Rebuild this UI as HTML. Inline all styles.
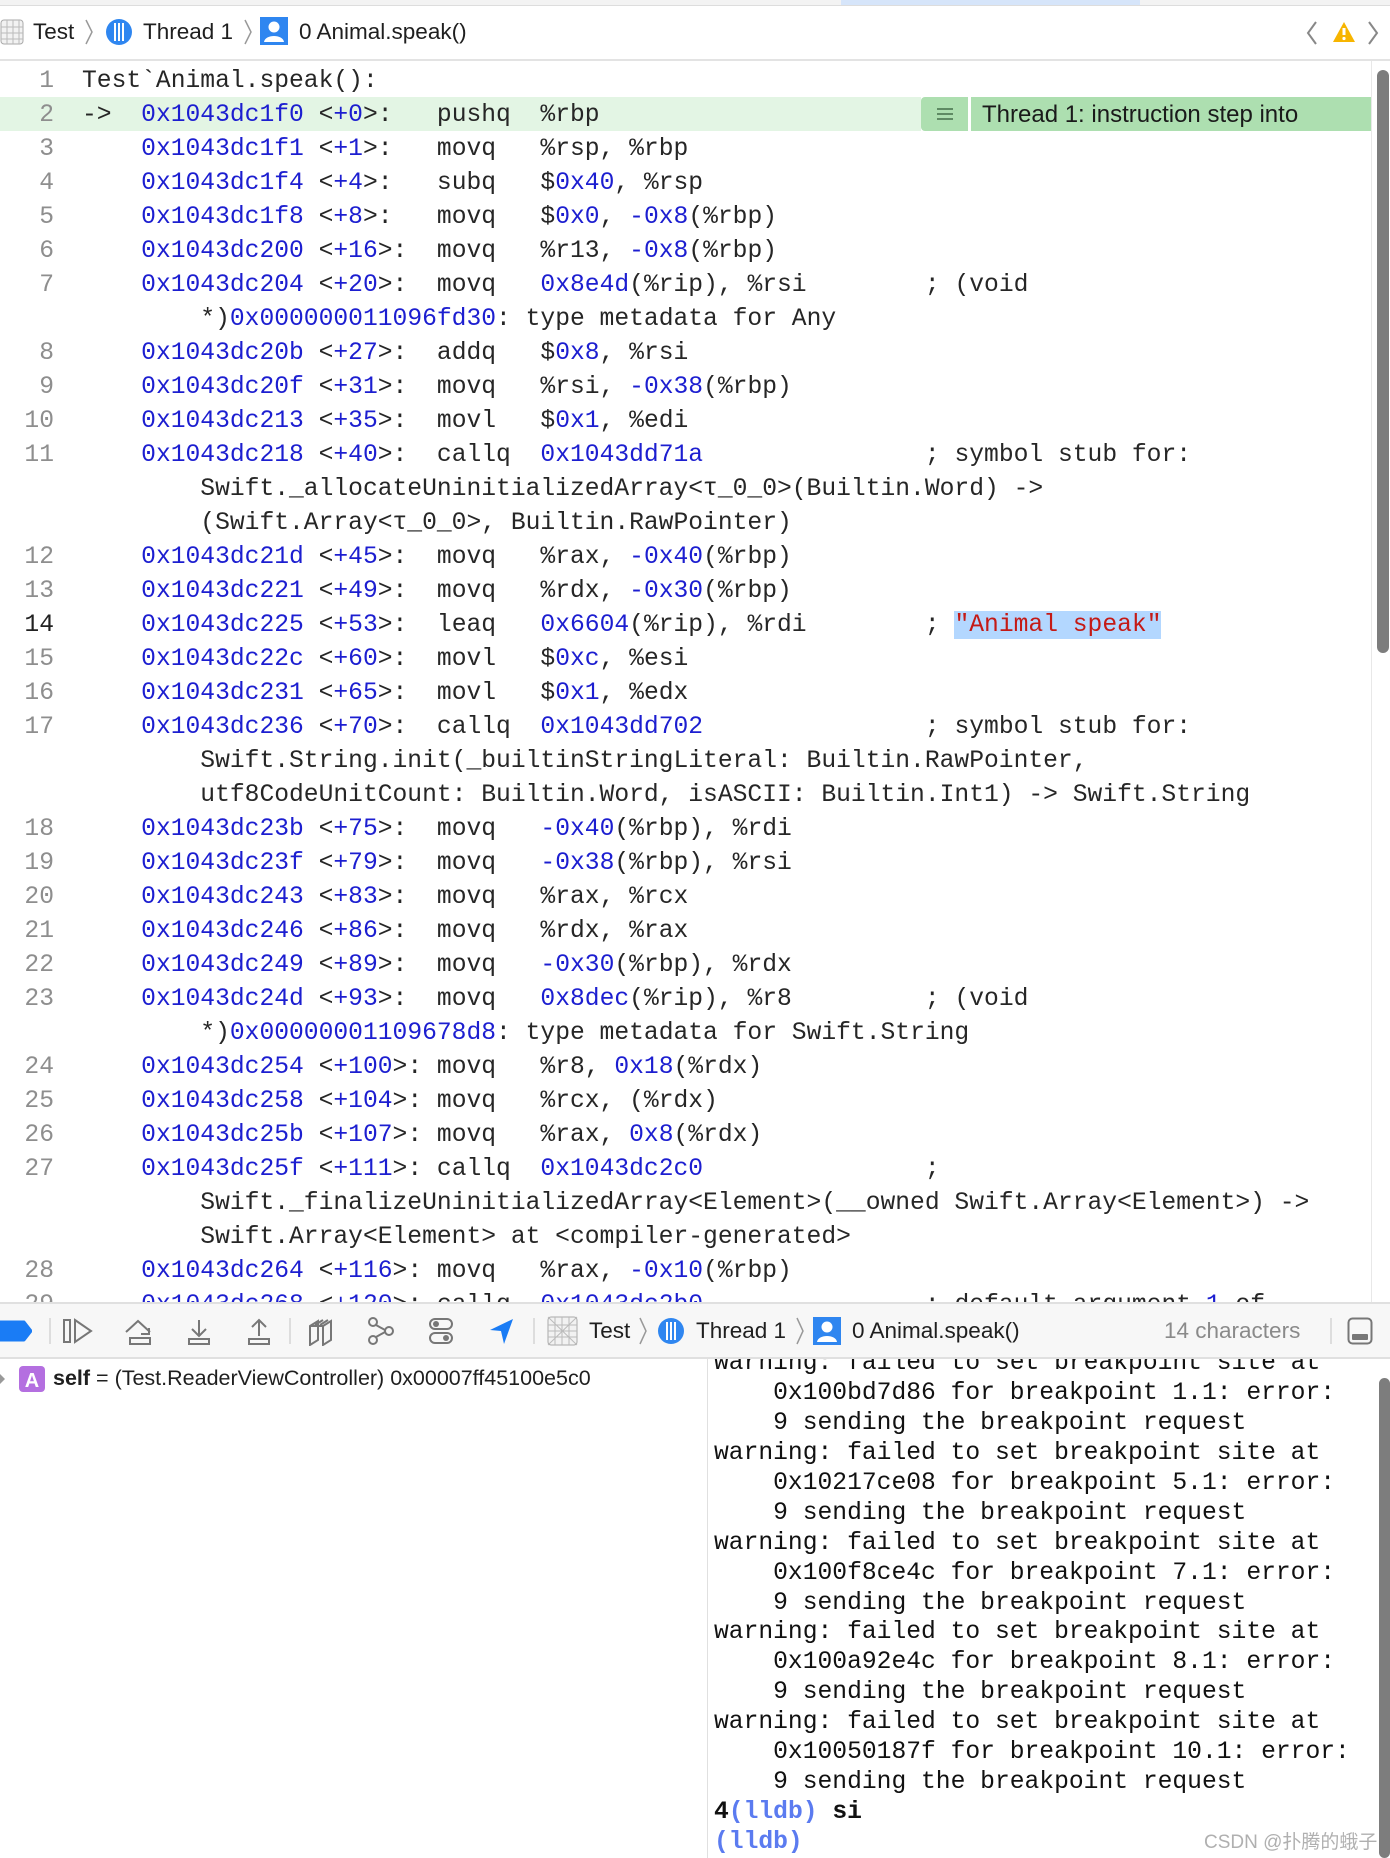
<!DOCTYPE html>
<html><head><meta charset="utf-8"><style>
*{margin:0;padding:0;box-sizing:border-box}
body{width:1390px;height:1858px;position:relative;background:#fff;overflow:hidden;font-family:"Liberation Sans",sans-serif;color:#1f1f1f}
.ui{font-size:22.5px;position:absolute;white-space:nowrap}
.r{position:absolute;left:0;width:1372px;height:34px;line-height:36px;font-family:"Liberation Mono",monospace;font-size:24.65px;white-space:pre;color:#262626}
.ln{position:absolute;left:0;width:54px;text-align:right;color:#8e8e8e}
.c{position:absolute;left:82px}
.n{color:#1c1ed0}
.s{color:#c41a16;background:#b3d7ff}
.con{position:absolute;left:714px;font-family:"Liberation Mono",monospace;font-size:24.65px;white-space:pre;color:#111;height:29.94px;line-height:29.94px}
.lb{color:#5b7bf0;font-weight:bold}
</style></head><body>
<div style="position:absolute;left:0;top:0;width:1390px;height:6px;background:#f3f3f3;border-bottom:1px solid #ddd"></div>
<div style="position:absolute;left:841px;top:0;width:299px;height:5px;background:#d6e5fa"></div>
<svg style="position:absolute;left:0;top:19px" width="24" height="26" viewBox="0 0 24 26"><rect x="1" y="1" width="22" height="24" rx="3" fill="#f2f2f2" stroke="#aaa"/><path d="M1 8H23M1 14H23M1 20H23M7 1V25M13 1V25M19 1V25" stroke="#bbb" stroke-width="1"/></svg>
<div class="ui" style="left:33px;top:19px">Test</div>
<svg style="position:absolute;left:84px;top:18px" width="10" height="28"><path d="M2 2L8 14L2 26" stroke="#999" fill="none" stroke-width="1.5"/></svg>
<svg style="position:absolute;left:104px;top:17px" width="30" height="30"><circle cx="15" cy="15" r="13" fill="#2f86f0"/><path d="M11 6V24M15 6V24M19 6V24" stroke="#fff" stroke-width="2"/></svg>
<div class="ui" style="left:143px;top:19px">Thread 1</div>
<svg style="position:absolute;left:243px;top:18px" width="10" height="28"><path d="M2 2L8 14L2 26" stroke="#999" fill="none" stroke-width="1.5"/></svg>
<svg style="position:absolute;left:260px;top:17px" width="28" height="28"><rect width="28" height="28" fill="#2f86f0"/><circle cx="14" cy="10" r="5.5" fill="#fff"/><path d="M4 25C5 17 23 17 24 25Z" fill="#fff"/></svg>
<div class="ui" style="left:299px;top:19px">0 Animal.speak()</div>
<svg style="position:absolute;left:1305px;top:20px" width="14" height="26"><path d="M11 2L3 13L11 24" stroke="#888" fill="none" stroke-width="2"/></svg>
<svg style="position:absolute;left:1332px;top:20px" width="24" height="24"><path d="M12 2L23 22H1Z" fill="#f7b500"/><path d="M12 8V15" stroke="#fff" stroke-width="3"/><circle cx="12" cy="18.5" r="1.6" fill="#fff"/></svg>
<svg style="position:absolute;left:1366px;top:20px" width="14" height="26"><path d="M3 2L11 13L3 24" stroke="#888" fill="none" stroke-width="2"/></svg>
<div style="position:absolute;left:0;top:59px;width:1390px;height:2px;background:#e3e3e3"></div>

<div style="position:absolute;left:1371px;top:61px;width:1px;height:1242px;background:#e8e8e8"></div>
<div style="position:absolute;left:1377px;top:70px;width:12px;height:583px;border-radius:6px;background:#7d7d7d"></div>
<div style="position:absolute;left:0;top:97px;width:921px;height:34px;background:#e3f5e4"></div>
<div style="position:absolute;left:921px;top:97px;width:47px;height:34px;background:#addfb0;border-radius:4px 0 0 4px"></div>
<svg style="position:absolute;left:936px;top:105px" width="18" height="18"><path d="M1 4H17M1 9H17M1 14H17" stroke="#5e8a63" stroke-width="2"/></svg>
<div style="position:absolute;left:971px;top:97px;width:400px;height:34px;background:#addfb0"></div>
<div class="ui" style="left:982px;top:98px;line-height:34px;font-size:24px;color:#1a1a1a">Thread 1: instruction step into</div>

<div class="r" style="top:63px"><span class="ln">1</span><span class="c">Test`Animal.speak():</span></div>
<div class="r" style="top:97px"><span class="ln">2</span><span class="c">-&gt;  <span class="n">0x1043dc1f0</span> &lt;<span class="n">+0</span>&gt;:   pushq  %rbp</span></div>
<div class="r" style="top:131px"><span class="ln">3</span><span class="c">    <span class="n">0x1043dc1f1</span> &lt;<span class="n">+1</span>&gt;:   movq   %rsp, %rbp</span></div>
<div class="r" style="top:165px"><span class="ln">4</span><span class="c">    <span class="n">0x1043dc1f4</span> &lt;<span class="n">+4</span>&gt;:   subq   $<span class="n">0x40</span>, %rsp</span></div>
<div class="r" style="top:199px"><span class="ln">5</span><span class="c">    <span class="n">0x1043dc1f8</span> &lt;<span class="n">+8</span>&gt;:   movq   $<span class="n">0x0</span>, <span class="n">-0x8</span>(%rbp)</span></div>
<div class="r" style="top:233px"><span class="ln">6</span><span class="c">    <span class="n">0x1043dc200</span> &lt;<span class="n">+16</span>&gt;:  movq   %r13, <span class="n">-0x8</span>(%rbp)</span></div>
<div class="r" style="top:267px"><span class="ln">7</span><span class="c">    <span class="n">0x1043dc204</span> &lt;<span class="n">+20</span>&gt;:  movq   <span class="n">0x8e4d</span>(%rip), %rsi        ; (void</span></div>
<div class="r" style="top:301px"><span class="c">        *)<span class="n">0x000000011096fd30</span>: type metadata for Any</span></div>
<div class="r" style="top:335px"><span class="ln">8</span><span class="c">    <span class="n">0x1043dc20b</span> &lt;<span class="n">+27</span>&gt;:  addq   $<span class="n">0x8</span>, %rsi</span></div>
<div class="r" style="top:369px"><span class="ln">9</span><span class="c">    <span class="n">0x1043dc20f</span> &lt;<span class="n">+31</span>&gt;:  movq   %rsi, <span class="n">-0x38</span>(%rbp)</span></div>
<div class="r" style="top:403px"><span class="ln">10</span><span class="c">    <span class="n">0x1043dc213</span> &lt;<span class="n">+35</span>&gt;:  movl   $<span class="n">0x1</span>, %edi</span></div>
<div class="r" style="top:437px"><span class="ln">11</span><span class="c">    <span class="n">0x1043dc218</span> &lt;<span class="n">+40</span>&gt;:  callq  <span class="n">0x1043dd71a</span>               ; symbol stub for:</span></div>
<div class="r" style="top:471px"><span class="c">        Swift._allocateUninitializedArray&lt;τ_0_0&gt;(Builtin.Word) -&gt;</span></div>
<div class="r" style="top:505px"><span class="c">        (Swift.Array&lt;τ_0_0&gt;, Builtin.RawPointer)</span></div>
<div class="r" style="top:539px"><span class="ln">12</span><span class="c">    <span class="n">0x1043dc21d</span> &lt;<span class="n">+45</span>&gt;:  movq   %rax, <span class="n">-0x40</span>(%rbp)</span></div>
<div class="r" style="top:573px"><span class="ln">13</span><span class="c">    <span class="n">0x1043dc221</span> &lt;<span class="n">+49</span>&gt;:  movq   %rdx, <span class="n">-0x30</span>(%rbp)</span></div>
<div class="r" style="top:607px"><span class="ln" style="color:#222">14</span><span class="c">    <span class="n">0x1043dc225</span> &lt;<span class="n">+53</span>&gt;:  leaq   <span class="n">0x6604</span>(%rip), %rdi        ; <span class="s">"Animal speak"</span></span></div>
<div class="r" style="top:641px"><span class="ln">15</span><span class="c">    <span class="n">0x1043dc22c</span> &lt;<span class="n">+60</span>&gt;:  movl   $<span class="n">0xc</span>, %esi</span></div>
<div class="r" style="top:675px"><span class="ln">16</span><span class="c">    <span class="n">0x1043dc231</span> &lt;<span class="n">+65</span>&gt;:  movl   $<span class="n">0x1</span>, %edx</span></div>
<div class="r" style="top:709px"><span class="ln">17</span><span class="c">    <span class="n">0x1043dc236</span> &lt;<span class="n">+70</span>&gt;:  callq  <span class="n">0x1043dd702</span>               ; symbol stub for:</span></div>
<div class="r" style="top:743px"><span class="c">        Swift.String.init(_builtinStringLiteral: Builtin.RawPointer,</span></div>
<div class="r" style="top:777px"><span class="c">        utf8CodeUnitCount: Builtin.Word, isASCII: Builtin.Int1) -&gt; Swift.String</span></div>
<div class="r" style="top:811px"><span class="ln">18</span><span class="c">    <span class="n">0x1043dc23b</span> &lt;<span class="n">+75</span>&gt;:  movq   <span class="n">-0x40</span>(%rbp), %rdi</span></div>
<div class="r" style="top:845px"><span class="ln">19</span><span class="c">    <span class="n">0x1043dc23f</span> &lt;<span class="n">+79</span>&gt;:  movq   <span class="n">-0x38</span>(%rbp), %rsi</span></div>
<div class="r" style="top:879px"><span class="ln">20</span><span class="c">    <span class="n">0x1043dc243</span> &lt;<span class="n">+83</span>&gt;:  movq   %rax, %rcx</span></div>
<div class="r" style="top:913px"><span class="ln">21</span><span class="c">    <span class="n">0x1043dc246</span> &lt;<span class="n">+86</span>&gt;:  movq   %rdx, %rax</span></div>
<div class="r" style="top:947px"><span class="ln">22</span><span class="c">    <span class="n">0x1043dc249</span> &lt;<span class="n">+89</span>&gt;:  movq   <span class="n">-0x30</span>(%rbp), %rdx</span></div>
<div class="r" style="top:981px"><span class="ln">23</span><span class="c">    <span class="n">0x1043dc24d</span> &lt;<span class="n">+93</span>&gt;:  movq   <span class="n">0x8dec</span>(%rip), %r8         ; (void</span></div>
<div class="r" style="top:1015px"><span class="c">        *)<span class="n">0x00000001109678d8</span>: type metadata for Swift.String</span></div>
<div class="r" style="top:1049px"><span class="ln">24</span><span class="c">    <span class="n">0x1043dc254</span> &lt;<span class="n">+100</span>&gt;: movq   %r8, <span class="n">0x18</span>(%rdx)</span></div>
<div class="r" style="top:1083px"><span class="ln">25</span><span class="c">    <span class="n">0x1043dc258</span> &lt;<span class="n">+104</span>&gt;: movq   %rcx, (%rdx)</span></div>
<div class="r" style="top:1117px"><span class="ln">26</span><span class="c">    <span class="n">0x1043dc25b</span> &lt;<span class="n">+107</span>&gt;: movq   %rax, <span class="n">0x8</span>(%rdx)</span></div>
<div class="r" style="top:1151px"><span class="ln">27</span><span class="c">    <span class="n">0x1043dc25f</span> &lt;<span class="n">+111</span>&gt;: callq  <span class="n">0x1043dc2c0</span>               ;</span></div>
<div class="r" style="top:1185px"><span class="c">        Swift._finalizeUninitializedArray&lt;Element&gt;(__owned Swift.Array&lt;Element&gt;) -&gt;</span></div>
<div class="r" style="top:1219px"><span class="c">        Swift.Array&lt;Element&gt; at &lt;compiler-generated&gt;</span></div>
<div class="r" style="top:1253px"><span class="ln">28</span><span class="c">    <span class="n">0x1043dc264</span> &lt;<span class="n">+116</span>&gt;: movq   %rax, <span class="n">-0x10</span>(%rbp)</span></div>
<div class="r" style="top:1287px"><span class="ln">29</span><span class="c">    <span class="n">0x1043dc268</span> &lt;<span class="n">+120</span>&gt;: callq  <span class="n">0x1043dc2b0</span>               ; default argument <span class="n">1</span> of</span></div>

<div style="position:absolute;left:0;top:1302px;width:1390px;height:57px;background:#f7f7f7;border-top:2px solid #e0e0e0;border-bottom:2px solid #e0e0e0"></div>
<svg style="position:absolute;left:0;top:1320px" width="32" height="22"><path d="M0 2H24L31 11L24 20H0Z" fill="#1a7cf5" stroke="#1a7cf5" stroke-linejoin="round" stroke-width="3"/></svg>
<div style="position:absolute;left:49px;top:1318px;width:2px;height:26px;background:#ddd"></div>
<svg style="position:absolute;left:62px;top:1318px" width="32" height="26" viewBox="0 0 32 26"><rect x="2" y="2" width="6" height="22" fill="none" stroke="#777" stroke-width="2"/><path d="M13 2L29 13L13 24Z" fill="none" stroke="#777" stroke-width="2"/></svg>
<svg style="position:absolute;left:124px;top:1318px" width="32" height="28" viewBox="0 0 32 28"><path d="M2 14L14 3L26 14" fill="none" stroke="#777" stroke-width="2"/><path d="M17 16H25V10" fill="none" stroke="#777" stroke-width="2"/><rect x="6" y="20" width="20" height="6" fill="none" stroke="#777" stroke-width="2"/></svg>
<svg style="position:absolute;left:186px;top:1318px" width="26" height="28" viewBox="0 0 26 28"><path d="M13 2V17M6 11L13 18L20 11" fill="none" stroke="#777" stroke-width="2"/><rect x="3" y="21" width="20" height="5" fill="none" stroke="#777" stroke-width="2"/></svg>
<svg style="position:absolute;left:246px;top:1318px" width="26" height="28" viewBox="0 0 26 28"><path d="M13 18V3M6 9L13 2L20 9" fill="none" stroke="#777" stroke-width="2"/><rect x="3" y="21" width="20" height="5" fill="none" stroke="#777" stroke-width="2"/></svg>
<div style="position:absolute;left:289px;top:1318px;width:2px;height:26px;background:#ddd"></div>
<svg style="position:absolute;left:308px;top:1318px" width="28" height="28" viewBox="0 0 28 28"><path d="M2 8L10 3V22L2 27Z M7 7L15 2 M12 7L20 2 M15 8L23 3V22L15 27Z" fill="none" stroke="#777" stroke-width="2"/><path d="M2 8H15" stroke="#777" stroke-width="2"/></svg>
<svg style="position:absolute;left:367px;top:1317px" width="28" height="28" viewBox="0 0 28 28"><circle cx="6" cy="5" r="4" fill="none" stroke="#777" stroke-width="2"/><circle cx="6" cy="23" r="4" fill="none" stroke="#777" stroke-width="2"/><circle cx="22" cy="14" r="4" fill="none" stroke="#777" stroke-width="2"/><path d="M9 8L18 13M9 20L18 15" stroke="#777" stroke-width="2"/></svg>
<svg style="position:absolute;left:428px;top:1317px" width="26" height="28" viewBox="0 0 26 28"><rect x="2" y="2" width="22" height="10" rx="5" fill="none" stroke="#777" stroke-width="2"/><rect x="2" y="16" width="22" height="10" rx="5" fill="none" stroke="#777" stroke-width="2"/><circle cx="8" cy="7" r="3" fill="#777"/><circle cx="18" cy="21" r="3" fill="#777"/></svg>
<svg style="position:absolute;left:488px;top:1317px" width="26" height="28" viewBox="0 0 26 28"><path d="M25 2L2 13L13 14L16 27Z" fill="#1a7cf5"/></svg>
<div style="position:absolute;left:533px;top:1318px;width:2px;height:26px;background:#ddd"></div>
<svg style="position:absolute;left:547px;top:1316px" width="31" height="30" viewBox="0 0 31 30"><rect x="1" y="1" width="29" height="28" rx="3" fill="#f2f2f2" stroke="#aaa"/><path d="M1 9H30M1 15H30M1 21H30M8 1V29M15 1V29M22 1V29M1 1L30 29M30 1L1 29" stroke="#bbb" stroke-width="1"/></svg>
<div class="ui" style="left:589px;top:1318px">Test</div>
<svg style="position:absolute;left:638px;top:1316px" width="10" height="30"><path d="M2 2L8 15L2 28" stroke="#999" fill="none" stroke-width="1.5"/></svg>
<svg style="position:absolute;left:656px;top:1316px" width="30" height="30"><circle cx="15" cy="15" r="13" fill="#2f86f0"/><path d="M11 6V24M15 6V24M19 6V24" stroke="#fff" stroke-width="2"/></svg>
<div class="ui" style="left:696px;top:1318px">Thread 1</div>
<svg style="position:absolute;left:795px;top:1316px" width="10" height="30"><path d="M2 2L8 15L2 28" stroke="#999" fill="none" stroke-width="1.5"/></svg>
<svg style="position:absolute;left:813px;top:1317px" width="28" height="28"><rect width="28" height="28" fill="#2f86f0"/><circle cx="14" cy="10" r="5.5" fill="#fff"/><path d="M4 25C5 17 23 17 24 25Z" fill="#fff"/></svg>
<div class="ui" style="left:852px;top:1318px">0 Animal.speak()</div>
<div class="ui" style="left:1164px;top:1318px;color:#8a8a8a">14 characters</div>
<div style="position:absolute;left:1330px;top:1318px;width:2px;height:26px;background:#ddd"></div>
<svg style="position:absolute;left:1347px;top:1317px" width="26" height="28" viewBox="0 0 26 28"><rect x="1.5" y="1.5" width="23" height="25" rx="4" fill="none" stroke="#777" stroke-width="2"/><rect x="5" y="17" width="16" height="6" rx="1" fill="#777"/></svg>

<svg style="position:absolute;left:0;top:1373px" width="6" height="12"><path d="M0 1L5 6L0 11Z" fill="#999"/></svg>
<svg style="position:absolute;left:19px;top:1366px" width="26" height="26"><rect width="26" height="26" rx="4" fill="#b46fe0"/><text x="13" y="21" text-anchor="middle" font-family="Liberation Sans" font-weight="bold" font-size="20" fill="#fff">A</text></svg>
<div class="ui" style="left:53px;top:1366px;font-size:21.5px"><b>self</b> = (Test.ReaderViewController) 0x00007ff45100e5c0</div>

<div style="position:absolute;left:707px;top:1359px;width:1px;height:499px;background:#e0e0e0"></div>
<div style="position:absolute;left:0;top:1359px;width:1390px;height:499px;overflow:hidden">
<div style="position:absolute;left:0;top:-10px;width:1390px">
<div class="con" style="top:0">warning: failed to set breakpoint site at</div>
<div class="con" style="top:29.94px">    0x100bd7d86 for breakpoint 1.1: error:</div>
<div class="con" style="top:59.88px">    9 sending the breakpoint request</div>
<div class="con" style="top:89.82px">warning: failed to set breakpoint site at</div>
<div class="con" style="top:119.76px">    0x10217ce08 for breakpoint 5.1: error:</div>
<div class="con" style="top:149.7px">    9 sending the breakpoint request</div>
<div class="con" style="top:179.64px">warning: failed to set breakpoint site at</div>
<div class="con" style="top:209.58px">    0x100f8ce4c for breakpoint 7.1: error:</div>
<div class="con" style="top:239.52px">    9 sending the breakpoint request</div>
<div class="con" style="top:269.46px">warning: failed to set breakpoint site at</div>
<div class="con" style="top:299.4px">    0x100a92e4c for breakpoint 8.1: error:</div>
<div class="con" style="top:329.34px">    9 sending the breakpoint request</div>
<div class="con" style="top:359.28px">warning: failed to set breakpoint site at</div>
<div class="con" style="top:389.22px">    0x10050187f for breakpoint 10.1: error:</div>
<div class="con" style="top:419.16px">    9 sending the breakpoint request</div>
<div class="con" style="top:449.1px;font-weight:bold">4<span class="lb">(lldb)</span> si</div>
<div class="con" style="top:479.04px"><span class="lb">(lldb)</span></div>
</div>
</div>
<div style="position:absolute;left:1379px;top:1378px;width:11px;height:480px;border-radius:6px;background:#7d7d7d"></div>
<div style="position:absolute;left:1204px;top:1827px;font-family:'Liberation Sans','Noto Sans CJK SC',sans-serif;font-size:19px;color:#b0b0b0;white-space:nowrap">CSDN @扑腾的蛾子</div>
</body></html>
